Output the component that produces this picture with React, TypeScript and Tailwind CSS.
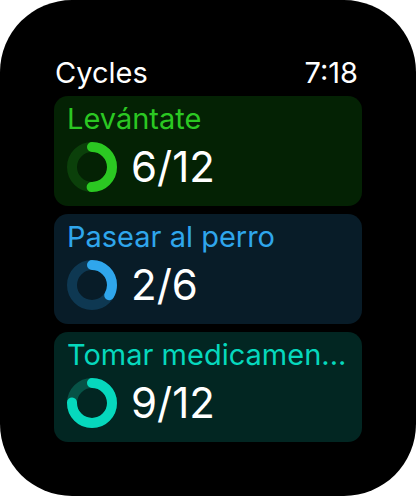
import React from 'react';

type Cycle = {
  name: string;
  done: number;
  total: number;
  text: string;
  bg: string;
  track: string;
  stroke: string;
};

const cycles: Cycle[] = [
  { name: 'Levántate', done: 6, total: 12, text: 'text-[#2bc822]', bg: 'bg-[#042204]', track: '#0b400a', stroke: '#2bc822' },
  { name: 'Pasear al perro', done: 2, total: 6, text: 'text-[#2fa6ec]', bg: 'bg-[#081c28]', track: '#0e3852', stroke: '#2fa6ec' },
  { name: 'Tomar medicamen...', done: 9, total: 12, text: 'text-[#06d8bd]', bg: 'bg-[#022622]', track: '#075246', stroke: '#06d8bd' },
];

function Ring({ value, track, stroke }: { value: number; track: string; stroke: string }) {
  const r = 20;
  const c = 2 * Math.PI * r;
  return (
    <svg width="50" height="50" viewBox="0 0 50 50" className="shrink-0">
      <circle cx="25" cy="25" r={r} fill="none" stroke={track} strokeWidth="10" />
      <circle
        cx="25"
        cy="25"
        r={r}
        fill="none"
        stroke={stroke}
        strokeWidth="10"
        strokeLinecap="round"
        strokeDasharray={`${c * value} ${c}`}
        transform="rotate(-90 25 25)"
      />
    </svg>
  );
}

export default function App() {
  return (
    <div className="w-[416px] h-[496px] bg-white" style={{ fontFamily: 'Inter, "Noto Sans", sans-serif' }}>
      <div className="w-full h-full bg-black rounded-[72px] overflow-hidden px-[54px] pt-[56px]">
        <div className="flex justify-between items-baseline text-white text-[29px] leading-[34px] pl-[1px] pr-[4px]">
          <span>Cycles</span>
          <span>7:18</span>
        </div>
        <div className="mt-[6px] flex flex-col gap-[8px]">
          {cycles.map((c) => (
            <div key={c.name} className={`${c.bg} rounded-[14px] pl-[13px] pr-[12px] pt-[6px] pb-[14px]`}>
              <div className={`${c.text} text-[29px] leading-[34px] whitespace-nowrap`}>{c.name}</div>
              <div className="mt-[6px] flex items-center gap-[14px]">
                <Ring value={c.done / c.total} track={c.track} stroke={c.stroke} />
                <span className="text-white text-[42px] leading-[50px]">
                  {c.done}/{c.total}
                </span>
              </div>
            </div>
          ))}
        </div>
      </div>
    </div>
  );
}
